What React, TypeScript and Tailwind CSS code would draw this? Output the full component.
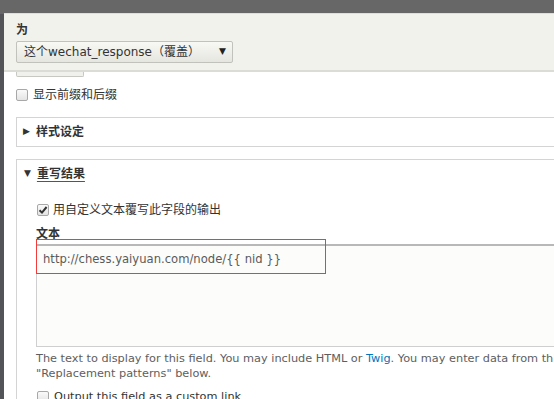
import React from "react";

const font = { fontFamily: '"DejaVu Sans", "Noto Sans CJK SC", sans-serif' };

const Box = ({ checked = false }: { checked?: boolean }) => (
  <span className="w-[12px] h-[12px] shrink-0 rounded-[2px] border border-[#a8a8a8] bg-gradient-to-b from-[#fafafa] to-[#e4e4e4] flex items-center justify-center">
    {checked && (
      <svg width="10" height="10" viewBox="0 0 10 10">
        <path d="M1.5 5.2 L4 7.6 L8.6 2" fill="none" stroke="#333" strokeWidth="2" />
      </svg>
    )}
  </span>
);

const App = () => {
  return (
    <div className="w-[554px] h-[399px] overflow-hidden flex bg-[#676767]" style={font}>
      <div className="w-[4px] shrink-0 flex flex-col">
        <div className="h-[14px] bg-[#676767]" />
        <div className="flex-1 bg-[#525458]" />
      </div>
      <div className="flex-1 min-w-0 flex flex-col">
        <div className="h-[14px] shrink-0 bg-[#676767] border-b border-[#dedede]" />
        <header className="h-[58px] shrink-0 bg-[#f2f2ec] border-b-2 border-[#dcdcd6] px-[12px] pt-[8px]">
          <div className="text-[12px] font-bold text-[#333] leading-[16px]">为</div>
          <div className="mt-[3px] w-[217px] h-[22px] rounded-[2px] border border-[#c2c2bc] bg-gradient-to-b from-[#f8f8f4] to-[#e6e6e1] flex items-center pl-[7px] pr-[6px] text-[12px] text-[#333]">
            <span className="flex-1 whitespace-nowrap">这个wechat_response（覆盖）</span>
            <span className="text-[9px] text-[#222]">▼</span>
          </div>
        </header>
        <main className="flex-1 bg-white px-[12px] overflow-hidden">
          <div className="w-[68px] h-[5px] border-x border-b border-[#c8c8c2] rounded-b-[2px] bg-[#f0f0ec]" />
          <label className="mt-[11px] h-[14px] flex items-center gap-[5px] text-[12px] text-[#333]">
            <Box />
            <span>显示前缀和后缀</span>
          </label>
          <section className="mt-[15px] w-[600px] h-[30px] border border-[#d4d4d4] flex items-center pl-[6px] gap-[6px] text-[12px] font-bold text-[#333]">
            <span className="text-[9px]">▶</span>
            <span>样式设定</span>
          </section>
          <section className="mt-[12px] w-[600px] border border-[#d4d4d4] pl-[20px] pt-[6px]">
            <div className="-ml-[13px] h-[16px] flex items-center gap-[6px] text-[12px] font-bold text-[#333]">
              <span className="text-[9px]">▼</span>
              <span className="underline underline-offset-[3px] decoration-[#555]">重写结果</span>
            </div>
            <label className="mt-[21px] h-[14px] flex items-center gap-[4px] text-[12px] text-[#333]">
              <Box checked />
              <span>用自定义文本覆写此字段的输出</span>
            </label>
            <div className="mt-[10px] text-[12px] font-bold text-[#333] leading-[14px] -ml-[1px]">文本</div>
            <div className="relative -ml-[1px] mt-[3px]">
              <div className="h-[103px] bg-[#fcfcfa] border border-[#cfcfcf] border-t-2 border-t-[#b8b8b8] pl-[6px] pt-[5px] text-[11.6px] text-[#5a5a5a]">
                http://chess.yaiyuan.com/node/{"{{"} nid {"}}"}
              </div>
              <div className="absolute left-0 top-[-5px] w-[290px] h-[35px] border-[1.5px] border-[#f23b3b]" />
            </div>
            <p className="-ml-[1px] mt-[4px] text-[11.3px] leading-[15px] text-[#5e5e5e] whitespace-nowrap">
              The text to display for this field. You may include HTML or{" "}
              <span className="text-[#0074bd]">Twig</span>. You may enter data from this view
              <br />
              "Replacement patterns" below.
            </p>
            <label className="mt-[9px] h-[14px] flex items-center gap-[5px] text-[11.3px] text-[#333]">
              <Box />
              <span>Output this field as a custom link</span>
            </label>
          </section>
        </main>
      </div>
    </div>
  );
};

export default App;
